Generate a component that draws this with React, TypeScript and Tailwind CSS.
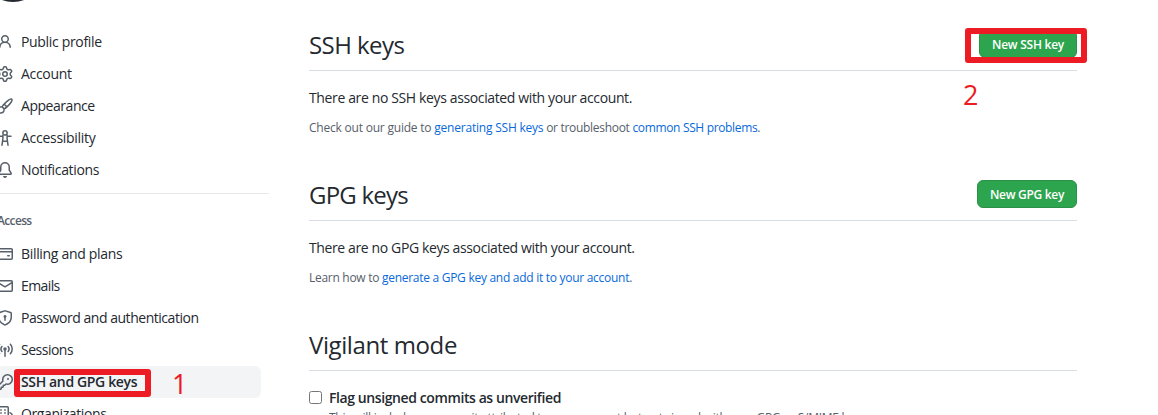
import React from "react";

const paths = {
  person:
    "M10.5 5a2.5 2.5 0 11-5 0 2.5 2.5 0 015 0zm.061 3.073a4 4 0 10-5.123 0 6.004 6.004 0 00-3.431 5.142.75.75 0 001.498.07 4.5 4.5 0 018.99 0 .75.75 0 101.498-.07 6.005 6.005 0 00-3.432-5.142z",
  gear:
    "M7.429 1.525a6.593 6.593 0 011.142 0c.036.003.108.036.137.146l.289 1.105c.147.56.55.967.997 1.189.174.086.341.183.501.29.417.278.97.423 1.53.27l1.102-.303c.11-.03.175.016.195.046.219.31.41.641.573.989.014.031.022.11-.059.19l-.815.806c-.411.406-.562.957-.53 1.456a4.588 4.588 0 010 .582c-.032.499.119 1.05.53 1.456l.815.806c.08.08.073.159.059.19a6.494 6.494 0 01-.573.99c-.02.029-.086.074-.195.045l-1.103-.303c-.559-.153-1.112-.008-1.529.27-.16.107-.327.204-.5.29-.449.222-.851.628-.998 1.189l-.289 1.105c-.029.11-.101.143-.137.146a6.613 6.613 0 01-1.142 0c-.036-.003-.108-.037-.137-.146l-.289-1.105c-.147-.56-.55-.967-.997-1.189a4.502 4.502 0 01-.501-.29c-.417-.278-.97-.423-1.53-.27l-1.102.303c-.11.03-.175-.016-.195-.046a6.492 6.492 0 01-.573-.989c-.014-.031-.022-.11.059-.19l.815-.806c.411-.406.562-.957.53-1.456a4.587 4.587 0 010-.582c.032-.499-.119-1.05-.53-1.456l-.815-.806c-.08-.08-.073-.159-.059-.19a6.44 6.44 0 01.573-.99c.02-.029.086-.075.195-.045l1.103.303c.559.153 1.112.008 1.529-.27.16-.107.327-.204.5-.29.449-.222.851-.628.998-1.189l.289-1.105c.029-.11.101-.143.137-.146zM8 0c-.236 0-.47.01-.701.03-.743.065-1.29.615-1.458 1.261l-.29 1.106c-.017.066-.078.158-.211.224a5.994 5.994 0 00-.668.386c-.123.082-.233.09-.3.071L3.27 2.776c-.644-.177-1.392.02-1.82.63a7.977 7.977 0 00-.704 1.217c-.315.675-.111 1.422.363 1.891l.815.806c.05.048.098.147.088.294a6.084 6.084 0 000 .772c.01.147-.038.246-.088.294l-.815.806c-.474.469-.678 1.216-.363 1.891.2.428.436.835.704 1.218.428.609 1.176.806 1.82.63l1.103-.303c.066-.019.176-.011.299.071.213.143.436.272.668.386.133.066.194.158.212.224l.289 1.106c.169.646.715 1.196 1.458 1.26a8.094 8.094 0 001.402 0c.743-.064 1.29-.614 1.458-1.26l.29-1.106c.017-.066.078-.158.211-.224a5.98 5.98 0 00.668-.386c.123-.082.233-.09.3-.071l1.102.302c.644.177 1.392-.02 1.82-.63.268-.382.505-.789.704-1.217.315-.675.111-1.422-.364-1.891l-.814-.806c-.05-.048-.098-.147-.088-.294a6.1 6.1 0 000-.772c-.01-.147.039-.246.088-.294l.814-.806c.475-.469.679-1.216.364-1.891a7.992 7.992 0 00-.704-1.218c-.428-.609-1.176-.806-1.82-.63l-1.103.303c-.066.019-.176.011-.299-.071a5.991 5.991 0 00-.668-.386c-.133-.066-.194-.158-.212-.224L10.16 1.29C9.99.645 9.444.095 8.701.031A8.094 8.094 0 008 0zm1.5 8a1.5 1.5 0 11-3 0 1.5 1.5 0 013 0zM11 8a3 3 0 11-6 0 3 3 0 016 0z",
  brush:
    "M11.134 1.535C9.722 2.562 8.16 4.057 6.889 5.312 5.8 6.387 5.041 7.401 4.575 8.294a3.745 3.745 0 00-3.227 1.054c-.43.431-.69 1.066-.86 1.657a11.982 11.982 0 00-.358 1.914A21.263 21.263 0 000 15.203v.054l.75-.007-.007.75h.054a14.404 14.404 0 00.654-.012 21.243 21.243 0 001.63-.118c.62-.07 1.3-.18 1.914-.357.592-.17 1.226-.43 1.657-.861a3.745 3.745 0 001.055-3.217c.908-.461 1.942-1.216 3.04-2.3 1.279-1.262 2.764-2.825 3.775-4.249.501-.706.923-1.428 1.125-2.096.2-.659.235-1.469-.368-2.07-.606-.607-1.42-.55-2.069-.34-.66.213-1.376.646-2.076 1.155zm-3.95 8.48a3.76 3.76 0 00-1.19-1.192 9.758 9.758 0 011.161-1.607l1.658 1.658a9.853 9.853 0 01-1.63 1.142zM12.016 2.749c-1.224.89-2.605 2.189-3.822 3.384l1.718 1.718c1.21-1.205 2.51-2.597 3.387-3.833.47-.662.78-1.227.912-1.662.134-.444.032-.551.009-.575h-.001V1.78c-.014-.014-.112-.113-.548.027-.432.14-.995.462-1.655.942zM1.62 13.089a19.56 19.56 0 00-.104 1.395 19.55 19.55 0 001.396-.104 10.528 10.528 0 001.668-.309c.526-.151.856-.325 1.011-.48a2.25 2.25 0 00-3.182-3.182c-.155.155-.329.485-.48 1.01a10.515 10.515 0 00-.309 1.67z",
  bell:
    "M8 16a2 2 0 001.985-1.75c.017-.137-.097-.25-.235-.25h-3.5c-.138 0-.252.113-.235.25A2 2 0 008 16zM8 1.5A3.5 3.5 0 004.5 5v2.947c0 .346-.102.683-.294.97l-1.703 2.556a.018.018 0 00-.003.01l.001.006c0 .002.002.004.004.006a.017.017 0 00.006.004l.007.001h10.964l.007-.001a.016.016 0 00.006-.004.016.016 0 00.004-.006l.001-.007a.017.017 0 00-.003-.01l-1.703-2.554a1.75 1.75 0 01-.294-.97V5A3.5 3.5 0 008 1.5zM3 5a5 5 0 0110 0v2.947c0 .05.015.098.042.139l1.703 2.555A1.518 1.518 0 0113.482 13H2.518a1.518 1.518 0 01-1.263-2.36l1.703-2.554A.25.25 0 003 7.947V5z",
  card:
    "M10.75 9a.75.75 0 000 1.5h1.5a.75.75 0 000-1.5h-1.5zM0 3.75C0 2.784.784 2 1.75 2h12.5c.966 0 1.75.784 1.75 1.75v8.5A1.75 1.75 0 0114.25 14H1.75A1.75 1.75 0 010 12.25v-8.5zm14.5 0V5h-13V3.75a.25.25 0 01.25-.25h12.5a.25.25 0 01.25.25zm0 2.75h-13v5.75c0 .138.112.25.25.25h12.5a.25.25 0 00.25-.25V6.5z",
  mail:
    "M1.75 2A1.75 1.75 0 000 3.75v8.5C0 13.216.784 14 1.75 14h12.5A1.75 1.75 0 0016 12.25v-8.5A1.75 1.75 0 0014.25 2H1.75zM14.5 4.07v-.32a.25.25 0 00-.25-.25H1.75a.25.25 0 00-.25.25v.32L8 7.88l6.5-3.81zm-13 1.74v6.441c0 .138.112.25.25.25h12.5a.25.25 0 00.25-.25V5.809L8.38 9.397a.75.75 0 01-.76 0L1.5 5.809z",
  shield:
    "M7.467.133a1.75 1.75 0 011.066 0l5.25 1.68A1.75 1.75 0 0115 3.48V7c0 1.566-.32 3.182-1.303 4.682-.983 1.498-2.585 2.813-5.032 3.855a1.7 1.7 0 01-1.33 0c-2.447-1.042-4.049-2.357-5.032-3.855C1.32 10.182 1 8.566 1 7V3.48a1.75 1.75 0 011.217-1.667l5.25-1.68zm.61 1.429a.25.25 0 00-.153 0l-5.25 1.68a.25.25 0 00-.174.238V7c0 1.358.275 2.666 1.057 3.86.784 1.194 2.121 2.34 4.366 3.297a.2.2 0 00.154 0c2.245-.956 3.582-2.104 4.366-3.298C13.225 9.666 13.5 8.36 13.5 7V3.48a.25.25 0 00-.174-.237l-5.25-1.68zM9.5 6.5a1.5 1.5 0 01-.75 1.3v2.45a.75.75 0 01-1.5 0V7.8A1.5 1.5 0 119.5 6.5z",
  key:
    "M6.5 5.5a4 4 0 112.731 3.795.75.75 0 00-.768.18L7.44 10.5H6.25a.75.75 0 00-.75.75v1.19l-.06.06H4.25a.75.75 0 00-.75.75v1.19l-.06.06H1.75a.25.25 0 01-.25-.25v-1.69l5.024-5.023a.75.75 0 00.181-.768A3.995 3.995 0 016.5 5.5zm4-5.5a5.5 5.5 0 00-5.348 6.788L.22 11.72a.75.75 0 00-.22.53v2C0 15.216.784 16 1.75 16h2a.75.75 0 00.53-.22l.5-.5a.75.75 0 00.22-.53V14h.75a.75.75 0 00.53-.22l.5-.5a.75.75 0 00.22-.53V12h.75a.75.75 0 00.53-.22l.932-.932A5.5 5.5 0 1010.5 0zm.5 6a1 1 0 100-2 1 1 0 000 2z",
};

function Icon({ d }: { d: string }) {
  return (
    <svg viewBox="0 0 16 16" className="size-4 shrink-0 fill-[#57606a]" fillRule="evenodd">
      <path d={d} />
    </svg>
  );
}

function LineIcon({ children }: { children: React.ReactNode }) {
  return (
    <svg
      viewBox="0 0 16 16"
      className="size-4 shrink-0 fill-none stroke-[#57606a]"
      strokeWidth={1.5}
      strokeLinecap="round"
      strokeLinejoin="round"
    >
      {children}
    </svg>
  );
}

function AccessibilityIcon() {
  return (
    <LineIcon>
      <circle cx="8" cy="2.9" r="2.15" />
      <path d="M2 6.25h3.2M10.8 6.25H14M5.9 5.2v3.3L5 15.2M10.1 5.2v3.3l.9 6.7M6.4 11.2h3.2" />
    </LineIcon>
  );
}

function BroadcastIcon() {
  return (
    <LineIcon>
      <circle cx="8" cy="7" r="1" />
      <path d="M8 8v6.3M4.9 9.4a3.75 3.75 0 0 1 0-4.8M11.1 9.4a3.75 3.75 0 0 0 0-4.8M2.6 11.7a7 7 0 0 1 0-9.4M13.4 11.7a7 7 0 0 0 0-9.4" />
    </LineIcon>
  );
}

function OrganizationIcon() {
  return (
    <LineIcon>
      <path d="M4.75 15.25h-3a1 1 0 0 1-1-1V1.75a1 1 0 0 1 1-1h8.5a1 1 0 0 1 1 1v12.5a1 1 0 0 1-1 1h-3v-2h-2.5zM13 6.75l1.4.95c.5.3.6.5.6.9v5.65a1 1 0 0 1-1 1h-3" />
      <path d="M3.75 4h.5M7.75 4h.5M3.75 7h.5M7.75 7h.5M3.75 10h.5M7.75 10h.5" />
    </LineIcon>
  );
}

function NavItem({
  icon,
  label,
  className,
  active = false,
}: {
  icon: React.ReactNode;
  label: string;
  className: string;
  active?: boolean;
}) {
  return (
    <a
      className={
        active
          ? "flex h-8 w-[264px] items-center gap-2 rounded-md bg-[#f3f4f6] font-semibold"
          : "flex h-8 w-[264px] items-center gap-2"
      }
    >
      {icon}
      <span className={className}>{label}</span>
    </a>
  );
}

function SectionHeader({
  title,
  className,
  children,
}: {
  title: string;
  className: string;
  children?: React.ReactNode;
}) {
  return (
    <div className="flex h-[45px] items-start justify-between border-b border-[#d8dee4]">
      <h2 className={className}>{title}</h2>
      {children}
    </div>
  );
}

const buttonBase =
  "mt-[4px] flex h-7 items-center justify-center rounded-md border border-[#2a9147] bg-[#2da44e] pt-[2px] text-xs font-semibold text-white";

export default function App() {
  return (
    <div className="relative flex h-[415px] w-[1158px] overflow-hidden bg-white font-['Open_Sans',sans-serif] text-sm text-[#24292f]">
      <aside className="-ml-[3px] w-[272px] shrink-0">
        <div className="flex h-[26px] flex-col justify-start overflow-hidden">
          <div className="-mt-[62px] -ml-4 size-16 shrink-0 rounded-full bg-[#24292f]" />
        </div>
        <nav className="whitespace-nowrap">
          <NavItem icon={<Icon d={paths.person} />} label="Public profile" className="tracking-[-0.33px]" />
          <NavItem icon={<Icon d={paths.gear} />} label="Account" className="tracking-[-0.3px]" />
          <NavItem icon={<Icon d={paths.brush} />} label="Appearance" className="tracking-[-0.46px]" />
          <NavItem icon={<AccessibilityIcon />} label="Accessibility" className="tracking-[-0.28px]" />
          <NavItem icon={<Icon d={paths.bell} />} label="Notifications" className="tracking-[-0.33px]" />
          <div className="mt-[7px] border-t border-[#e6e9ec]" />
          <h3 className="mt-[18px] mb-2 text-xs leading-[18px] font-semibold tracking-[-0.65px] text-[#57606a]">
            Access
          </h3>
          <NavItem icon={<Icon d={paths.card} />} label="Billing and plans" className="tracking-[-0.32px]" />
          <NavItem icon={<Icon d={paths.mail} />} label="Emails" className="tracking-[-0.6px]" />
          <NavItem icon={<Icon d={paths.shield} />} label="Password and authentication" className="tracking-[-0.47px]" />
          <NavItem icon={<BroadcastIcon />} label="Sessions" className="tracking-[-0.5px]" />
          <NavItem icon={<Icon d={paths.key} />} label="SSH and GPG keys" className="tracking-[-0.36px]" active />
          <NavItem icon={<OrganizationIcon />} label="Organizations" className="tracking-[-0.4px]" />
        </nav>
      </aside>

      <main className="ml-10 w-[768px] shrink-0 whitespace-nowrap pt-[26px]">
        <section className="h-[150px]">
          <SectionHeader title="SSH keys" className="text-2xl leading-[38px] tracking-[-0.55px]">
            <button className={`${buttonBase} w-[98px] tracking-[-0.25px]`}>New SSH key</button>
          </SectionHeader>
          <p className="mt-4 leading-[22px] tracking-[-0.37px]">
            There are no SSH keys associated with your account.
          </p>
          <p className="mt-2 text-xs leading-[22px] text-[#57606a]">
            <span className="tracking-[-0.21px]">Check out our guide to </span>
            <a className="tracking-[-0.215px] text-[#0969da]">generating SSH keys</a>
            <span className="tracking-[-0.3px]"> or troubleshoot </span>
            <a className="tracking-[-0.34px] text-[#0969da]">common SSH problems</a>.
          </p>
        </section>

        <section className="h-[150px]">
          <SectionHeader title="GPG keys" className="text-2xl leading-[38px] tracking-[-0.78px]">
            <button className={`${buttonBase} w-[100px] tracking-[-0.3px]`}>New GPG key</button>
          </SectionHeader>
          <p className="mt-4 leading-[22px] tracking-[-0.38px]">
            There are no GPG keys associated with your account.
          </p>
          <p className="mt-2 text-xs leading-[22px] text-[#57606a]">
            <span className="tracking-[-0.285px]">Learn how to </span>
            <a className="tracking-[-0.28px] text-[#0969da]">generate a GPG key and add it to your account</a>.
          </p>
        </section>

        <section>
          <SectionHeader title="Vigilant mode" className="text-2xl leading-[38px] tracking-[-0.4px]" />
          <div className="mt-4 flex gap-[7px]">
            <span className="mt-1 size-[13px] shrink-0 rounded-[2.5px] border border-[#767676] bg-white" />
            <div>
              <p className="leading-[22px] font-semibold tracking-[-0.405px]">Flag unsigned commits as unverified</p>
              <p className="text-xs leading-[18px] tracking-[-0.27px] text-[#57606a]">
                This will include any commit attributed to your account but not signed with your GPG or S/MIME key.
              </p>
            </div>
          </div>
        </section>
      </main>

      <div className="absolute top-[369px] left-[14px] h-[28px] w-[137px] rounded-[3px] border-6 border-[#ed1c24]" />
      <span className="absolute top-[364px] left-[172px] text-[27px] leading-10 text-[#ed1c24]">1</span>
      <div className="absolute top-[28px] left-[965px] h-[35px] w-[122px] rounded-[3px] border-6 border-[#ed1c24]" />
      <span className="absolute top-[75px] left-[963px] text-[27px] leading-10 text-[#ed1c24]">2</span>
    </div>
  );
}
